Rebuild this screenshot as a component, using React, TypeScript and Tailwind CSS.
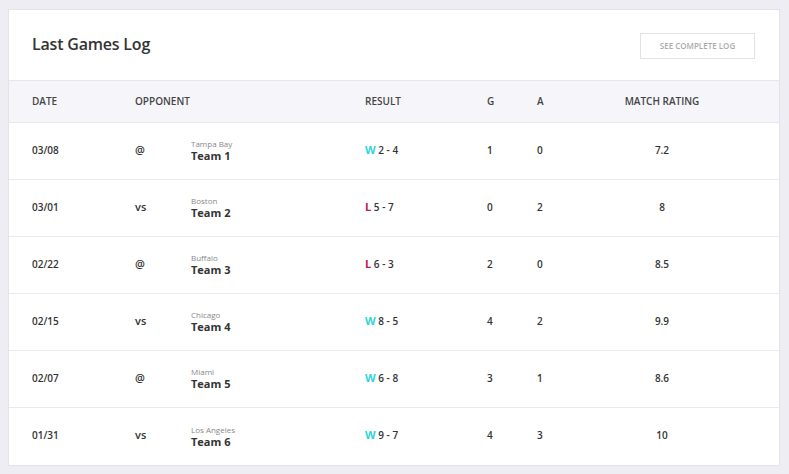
import React from "react";

const rows = [
  { d: "03/08", v: "@", city: "Tampa Bay", team: "Team 1", r: "W", s: "2 - 4", g: 1, a: 0, m: "7.2" },
  { d: "03/01", v: "vs", city: "Boston", team: "Team 2", r: "L", s: "5 - 7", g: 0, a: 2, m: "8" },
  { d: "02/22", v: "@", city: "Buffalo", team: "Team 3", r: "L", s: "6 - 3", g: 2, a: 0, m: "8.5" },
  { d: "02/15", v: "vs", city: "Chicago", team: "Team 4", r: "W", s: "8 - 5", g: 4, a: 2, m: "9.9" },
  { d: "02/07", v: "@", city: "Miami", team: "Team 5", r: "W", s: "6 - 8", g: 3, a: 1, m: "8.6" },
  { d: "01/31", v: "vs", city: "Los Angeles", team: "Team 6", r: "W", s: "9 - 7", g: 4, a: 3, m: "10" },
];

export default function App() {
  return (
    <div className="w-[789px] h-[474px] bg-[#ededf3] pt-[9px] pl-[8px] pr-[9px] text-[#333]" style={{ fontFamily: '"Open Sans", sans-serif' }}>
      <div className="bg-white border border-[#e3e3ea] h-[457px]">
        <div className="h-[70px] flex items-center justify-between pl-[23px] pr-[24px]">
          <h2 className="text-[16px] font-semibold tracking-[-0.2px] mb-[2px]">Last Games Log</h2>
          <button className="w-[115px] h-[26px] border border-[#e2e2e2] text-[8px] font-semibold text-[#aaa] mt-[1px]">SEE COMPLETE LOG</button>
        </div>
        <div className="h-[43px] bg-[#f6f6fa] border-y border-[#e6e6ec] flex items-center text-[10px] font-semibold text-[#444]">
          <div className="w-[126px] pl-[23px]">DATE</div>
          <div className="w-[230px]">OPPONENT</div>
          <div className="w-[122px]">RESULT</div>
          <div className="w-[50px]">G</div>
          <div className="w-[40px]">A</div>
          <div className="w-[170px] text-center">MATCH RATING</div>
        </div>
        {rows.map((r, i) => (
          <div key={i} className={`h-[57px] flex items-center text-[10px] font-semibold text-[#333] pb-[2px] ${i < 5 ? "border-b border-[#e9e9ee]" : ""}`}>
            <div className="w-[126px] pl-[23px]">{r.d}</div>
            <div className="w-[56px] text-[11px]">{r.v}</div>
            <div className="w-[174px] flex flex-col leading-[12px]">
              <span className="text-[8px] font-normal text-[#888]">{r.city}</span>
              <span className="text-[11px] font-bold text-[#333]">{r.team}</span>
            </div>
            <div className="w-[122px] text-[10px]">
              <span className={`text-[11px] font-bold ${r.r === "W" ? "text-[#2fd4d9]" : "text-[#c2185b]"}`}>{r.r}</span> {r.s}
            </div>
            <div className="w-[50px]">{r.g}</div>
            <div className="w-[40px]">{r.a}</div>
            <div className="w-[170px] text-center">{r.m}</div>
          </div>
        ))}
      </div>
    </div>
  );
}
